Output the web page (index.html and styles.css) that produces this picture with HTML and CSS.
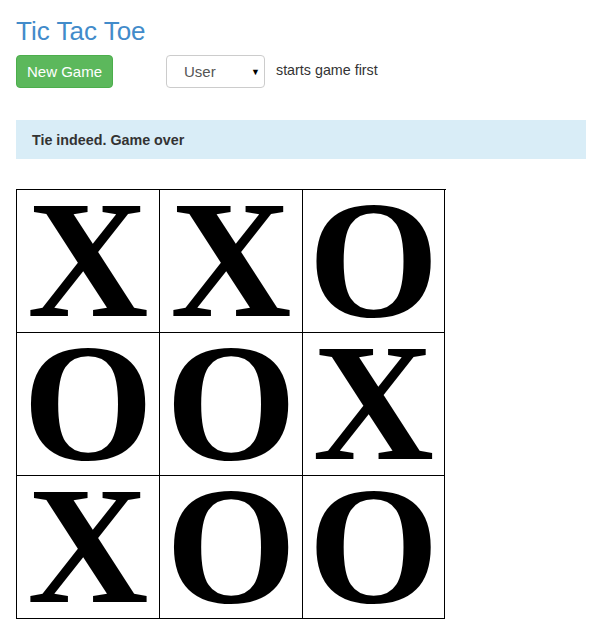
FILE: index.html
```html
<!DOCTYPE html>
<html>
<head>
<meta charset="utf-8">
<link rel="stylesheet" href="styles.css">
</head>
<body>
<div class="page">
  <h1 class="title">Tic Tac Toe</h1>
  <div class="controls">
    <button class="btn-new">New Game</button>
    <div class="select"><span class="select-value">User</span><span class="caret">▼</span></div>
    <span class="hint">starts game first</span>
  </div>
  <div class="alert">Tie indeed. Game over</div>
  <div class="board">
    <div class="cell">X</div><div class="cell">X</div><div class="cell">O</div>
    <div class="cell">O</div><div class="cell">O</div><div class="cell">X</div>
    <div class="cell">X</div><div class="cell">O</div><div class="cell">O</div>
  </div>
</div>
</body>
</html>
```
FILE: styles.css
```css
html, body { margin: 0; padding: 0; background: #fff; }
body { font-family: "Liberation Sans", Arial, sans-serif; font-size: 14px; color: #333; }
.page { padding: 0 16px; }
.title { margin: 0; padding-top: 16px; font-size: 26px; font-weight: 400; line-height: 30px; color: #428bca; }
.controls { display: flex; align-items: center; margin-top: 9px; height: 33px; }
.btn-new { width: 97px; height: 33px; background: #5cb85c; border: 1px solid #4cae4c; border-radius: 4px; color: #fff; font-family: "Liberation Sans", Arial, sans-serif; font-size: 15px; padding: 0; }
.select { margin-left: 53px; width: 99px; height: 33px; box-sizing: border-box; border: 1px solid #ccc; border-radius: 4px; display: flex; align-items: center; padding: 0 4px 0 17px; }
.select-value { flex: 1; color: #555; font-size: 15px; }
.caret { font-size: 9px; color: #000; }
.hint { margin-left: 11px; margin-top: -3px; font-size: 14.3px; }
.alert { margin-top: 32px; width: 570px; height: 39px; box-sizing: border-box; background: #d9edf7; padding: 0 16px; display: flex; align-items: center; font-weight: bold; color: #333; font-size: 14.3px; }
.board { margin-top: 30px; display: grid; grid-template-columns: 143px 143px 142px; grid-auto-rows: 143px; width: 429px; border-top: 1px solid #000; border-left: 1px solid #000; }
.cell { border-right: 1px solid #000; border-bottom: 1px solid #000; display: flex; align-items: center; justify-content: center; padding-bottom: 4px; box-sizing: border-box; font-family: "Liberation Serif", "Times New Roman", serif; font-weight: bold; font-size: 168px; line-height: 138px; color: #000; overflow: hidden; }
```
